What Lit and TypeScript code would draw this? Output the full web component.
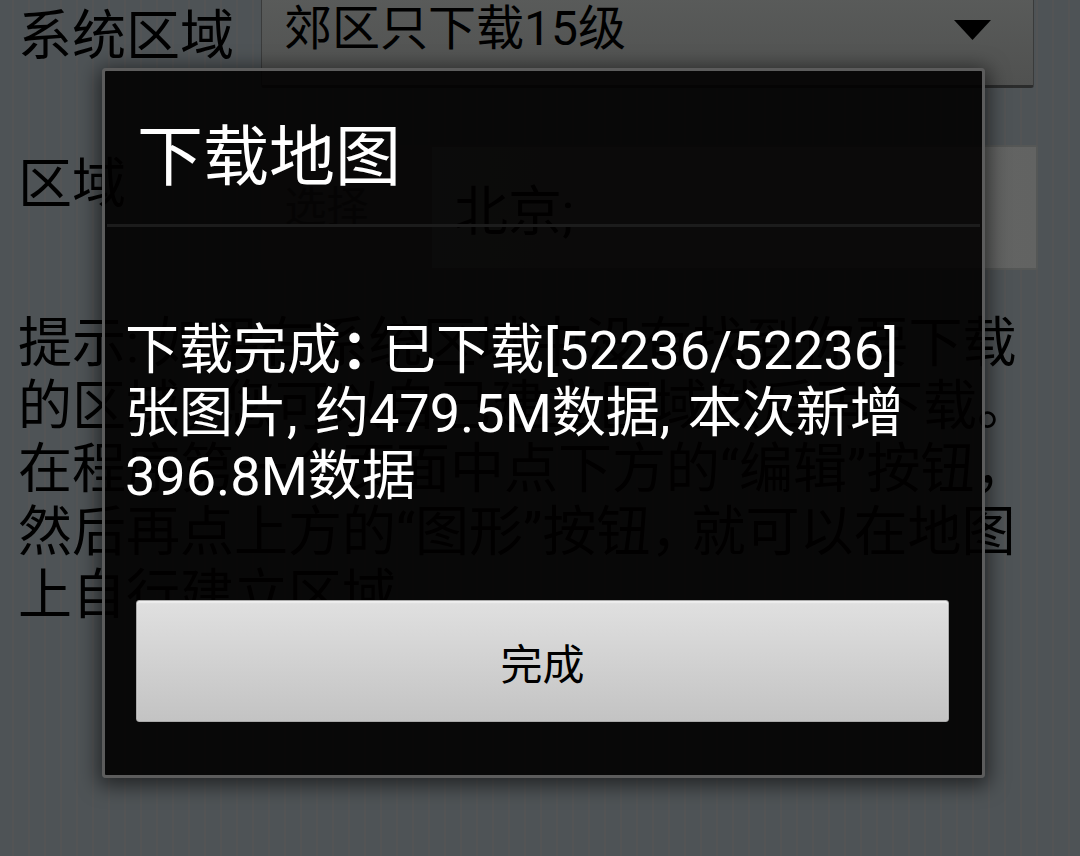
import { LitElement, html, css } from "lit";
import { customElement, state } from "lit/decorators.js";

@customElement("app-root")
export class AppRoot extends LitElement {
  static styles = css`
    :host {
      display: block;
      position: relative;
      min-height: 100vh;
      overflow: hidden;
      color: #000;
      font-family: Roboto, "Noto Sans CJK SC", sans-serif;
      background: repeating-linear-gradient(90deg, #4e5356 0 12px, #535455 12px 14px, #4e5356 14px 16px);
    }
    * {
      box-sizing: border-box;
    }
    .form {
      display: flex;
      flex-direction: column;
      margin-top: -30px;
      padding: 0 42px 0 18px;
      font-size: 54px;
      line-height: 63px;
    }
    .row {
      display: flex;
      align-items: flex-start;
    }
    .row + .row {
      margin-top: 57px;
    }
    .label {
      flex: 0 0 243px;
      padding-top: 35px;
    }
    .row + .row .label {
      padding-top: 8px;
    }
    .picker {
      position: relative;
      flex: 1;
      margin-right: 4px;
    }
    .select {
      display: block;
      width: 100%;
      height: 118px;
      padding: 0 96px 0 22px;
      appearance: none;
      border: 1px solid #3a3b3b;
      border-bottom: 3px solid #2b2c2c;
      border-radius: 3px;
      background: linear-gradient(#5c5e5d, #505150);
      color: #000;
      opacity: 1;
      font: inherit;
      font-size: 48px;
    }
    .arrow {
      position: absolute;
      right: 43px;
      top: 50px;
      width: 37px;
      height: 20px;
      pointer-events: none;
    }
    .pick {
      flex: none;
      width: 167px;
      height: 125px;
      margin-right: 2px;
      padding: 0 36px 0 0;
      border: 0;
      background: #505150;
      color: #2c2c2c;
      font: inherit;
      font-size: 42px;
      text-align: center;
    }
    .field {
      flex: 1;
      min-width: 0;
      height: 125px;
      padding: 0 22px;
      border: 2px solid #555756;
      border-radius: 2px;
      background: linear-gradient(90deg, #6c6e6d, #626362);
      color: #000;
      font: inherit;
    }
    .hint {
      margin: 42px 0 0;
    }
    .wide {
      display: inline-block;
      width: 41px;
      white-space: nowrap;
    }
    .colon {
      font-weight: 700;
    }
    .narrow {
      display: inline-block;
      width: 28px;
    }
    .overlay {
      position: absolute;
      inset: 0;
      padding: 68px 95px 0 102px;
    }
    .dialog {
      border: 3px solid #5c5c5c;
      border-radius: 4px;
      background: rgba(1, 0, 0, 0.9);
      box-shadow: 0 4px 20px 4px rgba(0, 0, 0, 0.55);
      color: #fff;
      padding: 0 2px 53px;
    }
    .title {
      margin: 0;
      padding: 48px 30px 27px;
      border-bottom: 3px solid #1c1c1c;
      font-size: 66px;
      font-weight: 400;
      line-height: 78px;
    }
    .message {
      margin: 0;
      padding: 92px 30px 92px 18px;
      font-size: 54px;
      line-height: 63px;
    }
    .done {
      display: block;
      width: calc(100% - 60px);
      height: 122px;
      margin: 0 auto 0 29px;
      border: 1px solid #aaa;
      border-radius: 3px;
      background: linear-gradient(#e0e0e0, #c3c3c3);
      box-shadow: inset 0 2px 1px #eee;
      color: #000;
      font: inherit;
      font-size: 42px;
    }
  `;

  @state() private open = true;

  private close() {
    this.open = false;
  }

  render() {
    return html`
      <form class="form">
        <div class="row">
          <label class="label" for="level">系统区域</label>
          <div class="picker">
            <select class="select" id="level">
              <option>郊区只下载15级</option>
            </select>
            <svg class="arrow" viewBox="0 0 37 20" aria-hidden="true">
              <path d="M0 0H37L18.500 20Z" />
            </svg>
          </div>
        </div>
        <div class="row">
          <label class="label" for="area">区域</label>
          <button class="pick" type="button">选择</button>
          <input class="field" id="area" value="北京;" />
        </div>
        <p class="hint">提示: 如果在系统区域中没有找到你要下载的区域<span class="wide">，</span>您可以自己建立区域然后再下载<span class="wide">。</span>在程序第一个页面中点下方的“编辑”按钮<span class="wide">，</span>然后再点上方的“图形”按钮<span class="wide">，</span>就可以在地图上自行建立区域</p>
      </form>
      ${this.open
        ? html`<div class="overlay">
            <section class="dialog" role="dialog" aria-labelledby="title">
              <h1 class="title" id="title">下载地图</h1>
              <p class="message">下载完成<span class="wide colon">：</span>已下载[52236/52236]张图片<span class="narrow">,</span>约479.5M数据<span class="narrow">,</span>本次新增396.8M数据</p>
              <button class="done" type="button" @click=${this.close}>完成</button>
            </section>
          </div>`
        : null}
    `;
  }
}
